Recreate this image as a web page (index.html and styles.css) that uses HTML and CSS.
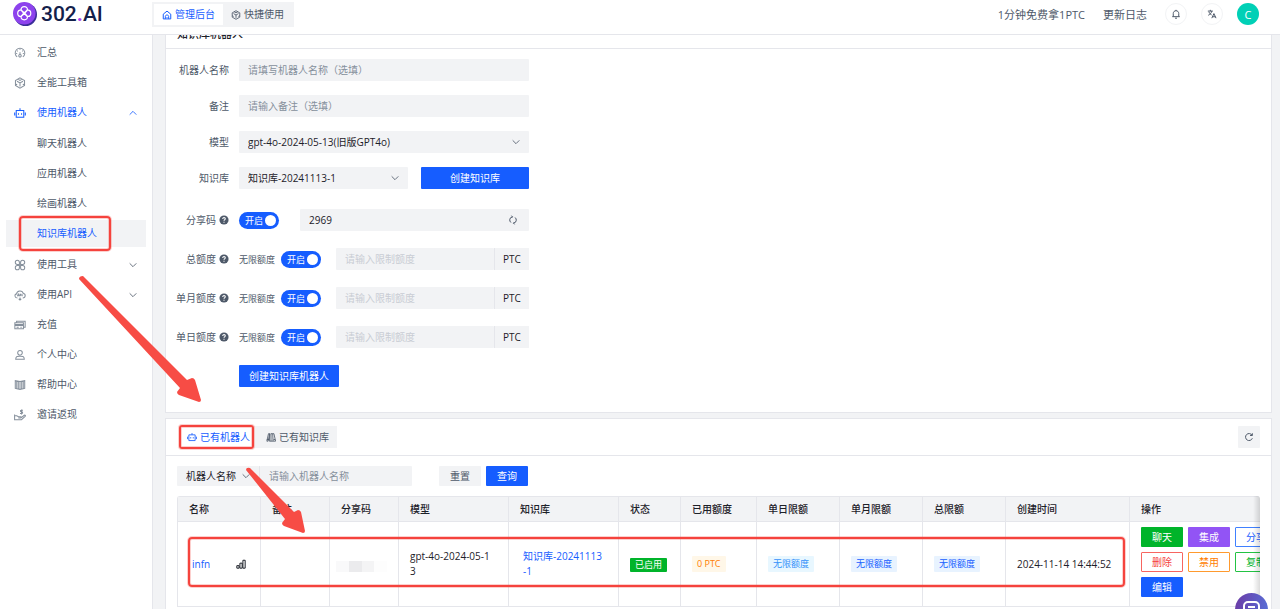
FILE: index.html
```html
<!DOCTYPE html>
<html lang="zh-CN">
<head>
<meta charset="utf-8">
<title>302.AI</title>
<link rel="stylesheet" href="styles.css">
</head>
<body>
<svg class="defs" aria-hidden="true">
  <symbol id="down" viewBox="0 0 12 12"><path d="M2 4l4 4 4-4" stroke-width="1"/></symbol>
  <symbol id="robot" viewBox="0 0 14 14"><path d="M2.600 4h8.800v8H2.600zM7 4V1.500M.8 6.500v3.500M13.200 6.500v3.500M5.200 7.200v1.800M8.800 7.200v1.800"/></symbol>
  <symbol id="cube" viewBox="0 0 14 14"><path d="M7 1l5.300 3v6L7 13l-5.300-3V4zM3.500 5L7 7l3.500-2M7 7v4M4.500 2.500L7 4l2.500-1.500M1.700 8l2 1M12.300 8l-2 1"/></symbol>
  <symbol id="help" viewBox="0 0 12 12"><circle cx="6" cy="6" r="5.500" fill="#4e5969" stroke="none"/><path d="M4.500 4.800C4.500 2.500 7.700 2.700 7.500 4.800 7.400 5.700 6 5.700 6 7M6 8.200v1.200" stroke="#fff" stroke-width="1.300"/></symbol>
</svg>

<header class="topbar">
  <a class="brand" href="#">
    <svg class="brand-mark" viewBox="0 0 24 24" aria-hidden="true"><circle cx="12.500" cy="12.500" r="11.500" fill="#3b2d99"/><circle cx="11.300" cy="11.300" r="11.300" fill="#8d42ed"/><g fill="none" stroke="#fff" stroke-width="1.200"><path d="M8.300 8.300C6.500 3.500 16 3.500 14.200 8.300 19 6.500 19 16 14.200 14.200 16 19 6.500 19 8.300 14.200 3.500 16 3.500 6.500 8.300 8.300z"/><path d="M8.300 8.300l2.400 2.900-2.400 3M14.200 8.300l-2.400 2.900 2.400 3M8.300 8.300l2.900 2.400 3-2.400M8.300 14.200l2.900-2.400 3 2.400"/></g></svg>
    <span class="brand-name">302<b>.</b>AI</span>
  </a>
  <nav class="modes">
    <a class="mode active" href="#"><svg class="ico" viewBox="0 0 12 12"><path d="M1.500 5L6 1.300 10.500 5v5.700h-9zM4 10.500V7.800c0-2.400 4-2.400 4 0v2.700M6 8.500v1"/></svg>管理后台</a>
    <a class="mode" href="#"><svg class="ico"><use href="#cube"/></svg>快捷使用</a>
  </nav>
  <div class="top-actions">
    <a class="top-link" href="#">1分钟免费拿1PTC</a>
    <a class="top-link" href="#">更新日志</a>
    <button class="round" aria-label="通知"><svg class="ico" viewBox="0 0 12 12"><path d="M1.500 9.200h9M2.700 9V5.500c0-4.600 6.600-4.600 6.600 0V9M6 1v1M4.800 11h2.400"/></svg></button>
    <button class="round" aria-label="语言"><svg class="ico" viewBox="0 0 12 12"><path d="M1 2.500h6M4 1v1.500M1.500 7.500C4 6.500 5.500 4.500 5.700 2.500M2.300 3.500C3 5.500 4 6.300 5.500 7M5.800 11l2.500-5.500L10.800 11M6.700 9.300H10"/></svg></button>
    <button class="avatar">C</button>
  </div>
</header>

<div class="shell">
  <aside class="sidebar">
    <nav class="menu">
      <a class="item" href="#"><svg class="ico" viewBox="0 0 14 14"><path d="M3.700 11.500a5.600 5.600 0 1 1 6.600 0M7 6v3M7 2.500v1M3.600 4.300l.7.700M10.400 4.300l-.7.700M2.500 7.500h1.200M10.300 7.500h1.200"/><circle cx="7" cy="10.300" r="1.500"/></svg><span>汇总</span></a>
      <a class="item" href="#"><svg class="ico"><use href="#cube"/></svg><span>全能工具箱</span></a>
      <a class="item blue" href="#"><svg class="ico"><use href="#robot"/></svg><span>使用机器人</span><svg class="arrow up"><use href="#down"/></svg></a>
      <div class="submenu">
        <a class="item" href="#">聊天机器人</a>
        <a class="item" href="#">应用机器人</a>
        <a class="item" href="#">绘画机器人</a>
        <a class="item blue selected" href="#">知识库机器人<i class="mark"></i></a>
      </div>
      <a class="item" href="#"><svg class="ico" viewBox="0 0 14 14"><path d="M6.300 6.300H3.900a2.400 2.400 0 1 1 2.400-2.400zM7.700 6.300V3.900a2.400 2.400 0 1 1 2.400 2.400zM6.300 7.700v2.400a2.400 2.400 0 1 1-2.400-2.400zM7.700 7.700h2.400a2.400 2.400 0 1 1-2.400 2.400z"/></svg><span>使用工具</span><svg class="arrow"><use href="#down"/></svg></a>
      <a class="item" href="#"><svg class="ico" viewBox="0 0 14 14"><path d="M4 10.500C.3 10.500.3 6 3 5.700 3.500 1.200 10 1.200 10.800 5.200c3.200.3 3 5.300-.6 5.300M7 12.500V10M5.500 11.500L7 13l1.500-1.500M4 8.500l1-2.500 1 2.500M7 8.500V6h1v1.300H7M9.500 6v2.500"/></svg><span>使用API</span><svg class="arrow"><use href="#down"/></svg></a>
      <a class="item" href="#"><svg class="ico" viewBox="0 0 14 14"><path d="M1 4.500h10v7H1zM3 4.500v-2h10v7h-2M1 6.500h10M1 7.500h10M3 9.500h2.500M7.500 9.500H9"/></svg><span>充值</span></a>
      <a class="item" href="#"><svg class="ico" viewBox="0 0 14 14"><circle cx="7" cy="4.500" r="2.700"/><path d="M2 12c0-4 3-3.600 5-3.600s5-.4 5 3.600z"/></svg><span>个人中心</span></a>
      <a class="item" href="#"><svg class="ico" viewBox="0 0 14 14"><path d="M7 3L1.500 2v9L7 12.200 12.500 11V2zM7 3v9M3.200 2.500v8.700M5 2.800v8.700M10.800 2.500v8.700M9 2.800v8.700"/></svg><span>帮助中心</span></a>
      <a class="item" href="#"><svg class="ico" viewBox="0 0 14 14"><path d="M.7 6.500v6.500M.7 8h2.500l2 1h2.500c1 0 1 1.500 0 1.500H5M8.500 10l3.500-2.700c1-.5 1.700.5 1 1.200L8.700 12.500H.8M10.500 1.500H8.300c-1 0-1 1.800 0 1.800h1c1 0 1 1.900 0 1.900H7M8.800.5v6"/></svg><span>邀请返现</span></a>
    </nav>
  </aside>

  <main class="main">
    <section class="card first">
      <h2 class="card-title">知识库机器人</h2>
      <form class="form">
        <div class="group">
          <div class="row"><label class="label" for="name">机器人名称</label><input class="field" id="name" placeholder="请填写机器人名称（选填）"></div>
          <div class="row"><label class="label" for="note">备注</label><input class="field" id="note" placeholder="请输入备注（选填）"></div>
          <div class="row"><label class="label" for="model">模型</label><div class="pick"><select class="field" id="model"><option>gpt-4o-2024-05-13(旧版GPT4o)</option></select><svg class="arrow"><use href="#down"/></svg></div></div>
          <div class="row"><label class="label" for="kb">知识库</label><div class="pick"><select class="field" id="kb"><option>知识库-20241113-1</option></select><svg class="arrow"><use href="#down"/></svg></div><button class="btn primary wide" type="button">创建知识库</button></div>
        </div>
        <div class="group loose">
          <div class="row"><label class="label" for="code">分享码<svg class="help"><use href="#help"/></svg></label><label class="switch"><input type="checkbox" checked>开启</label><div class="pick code"><input class="field" id="code" value="2969"><svg class="arrow" viewBox="0 0 12 12"><path d="M3.500 9A3.900 3.900 0 0 1 5 2.200M8.500 3A3.900 3.900 0 0 1 7 9.800M4.200.8L5.500 2.200 4.200 3.600M7.800 8.400L6.500 9.800l1.300 1.400"/></svg></div></div>
          <div class="row"><label class="label" for="q1">总额度<svg class="help"><use href="#help"/></svg></label><span class="small">无限额度</span><label class="switch"><input type="checkbox" checked>开启</label><div class="quota"><input class="field" id="q1" placeholder="请输入限制额度" disabled><span class="unit">PTC</span></div></div>
          <div class="row"><label class="label" for="q2">单月额度<svg class="help"><use href="#help"/></svg></label><span class="small">无限额度</span><label class="switch"><input type="checkbox" checked>开启</label><div class="quota"><input class="field" id="q2" placeholder="请输入限制额度" disabled><span class="unit">PTC</span></div></div>
          <div class="row"><label class="label" for="q3">单日额度<svg class="help"><use href="#help"/></svg></label><span class="small">无限额度</span><label class="switch"><input type="checkbox" checked>开启</label><div class="quota"><input class="field" id="q3" placeholder="请输入限制额度" disabled><span class="unit">PTC</span></div></div>
          <div class="row submit"><button class="btn primary" type="button">创建知识库机器人</button></div>
        </div>
      </form>
    </section>

    <section class="card second">
      <div class="card-head">
        <div class="tabs">
          <button class="tab active"><svg class="ico"><use href="#robot"/></svg>已有机器人<i class="mark"></i></button>
          <button class="tab"><svg class="ico" viewBox="0 0 12 12"><path stroke-width="1" d="M3 2L1 11h1.500l2-9zM6 2v9M4.500 2l-.5 9h2M6 2h2l.5 9H6M8 2h1.500l2 9H8.500M1 9h3M9 9h2"/></svg>已有知识库</button>
        </div>
        <button class="refresh" aria-label="刷新"><svg class="ico" viewBox="0 0 12 12"><path d="M10 7.500A4.200 4.200 0 1 1 9.600 3.800M10 1.500v2.700H7.300"/></svg></button>
      </div>
      <div class="content">
        <div class="filter">
          <div class="pick by"><select class="field" aria-label="筛选字段"><option>机器人名称</option></select><svg class="arrow"><use href="#down"/></svg></div>
          <input class="field term" aria-label="机器人名称" placeholder="请输入机器人名称">
          <button class="btn grey">重置</button>
          <button class="btn primary">查询</button>
        </div>
        <div class="table-wrap">
          <table>
            <colgroup><col class="c-name"><col class="c-short"><col class="c-short"><col class="c-model"><col class="c-model"><col class="c-state"><col class="c-used"><col class="c-limit"><col class="c-limit"><col class="c-limit"><col class="c-time"><col></colgroup>
            <thead><tr><th>名称</th><th>备注</th><th>分享码</th><th>模型</th><th>知识库</th><th>状态</th><th>已用额度</th><th>单日限额</th><th>单月限额</th><th>总限额</th><th>创建时间</th><th>操作</th></tr></thead>
            <tbody><tr>
              <td><div class="bot"><a href="#">infn</a><svg class="ico" viewBox="0 0 12 12"><path d="M1 8h2.700v3H1zM4.700 5h2.700v6H4.700zM8.300 1.500H11V11H8.300z"/></svg></div></td>
              <td></td>
              <td><div class="masked"><i></i><i></i><i></i><i></i></div></td>
              <td>gpt-4o-2024-05-1<br>3</td>
              <td><a class="kb" href="#">知识库-20241113<br>-1</a></td>
              <td><span class="tag on">已启用</span></td>
              <td><span class="tag orange">0 PTC</span></td>
              <td><span class="tag sky">无限额度</span></td>
              <td><span class="tag blue-tag">无限额度</span></td>
              <td><span class="tag blue-tag">无限额度</span></td>
              <td>2024-11-14 14:44:52</td>
              <td class="ops-cell"><div class="ops"><button class="btn green">聊天</button><button class="btn purple">集成</button><button class="btn line-blue">分享</button><button class="btn line-red">删除</button><button class="btn line-orange">禁用</button><button class="btn line-green">复制</button><button class="btn primary">编辑</button></div></td>
            </tr></tbody>
          </table>
          <i class="mark row-mark"></i>
        </div>
      </div>
    </section>
  </main>
</div>

<svg class="arrows" aria-hidden="true"><path d="M83 276l104 104 5-2q2 0 3 2l6 20q0 2-2 2l-20-7q-2-1-2-3l3-4L79 279q0-3 4-3zM250 468l44 44 4-2q2 0 3 2l4 19q0 2-2 2l-19-7q-2-1-2-3l3-4-39-49q0-3 4-2z"/></svg>
<button class="chat" aria-label="客服"><svg viewBox="0 0 20 20"><rect x="2" y="2" width="15" height="13" rx="4"/><path d="M6 7h7"/></svg></button>
</body>
</html>
```
FILE: styles.css
```css
* { box-sizing: border-box; }
body, button, input, select {
  font-family: "Open Sans", "Noto Sans CJK SC", sans-serif;
  font-size: 10px;
  line-height: 15px;
}
body {
  margin: 0;
  height: 100vh;
  overflow: hidden;
  display: flex;
  flex-direction: column;
  background: #f2f3f5;
  color: #1d2129;
}
a { color: #165dff; text-decoration: none; }
button, input, select { border: 0; border-radius: 1px; padding: 0; margin: 0; color: inherit; }
svg { fill: none; stroke: currentColor; stroke-width: 1.2; flex: none; }
.defs { position: absolute; width: 0; height: 0; }
.ico { width: 10px; height: 10px; }
.arrow { width: 10px; height: 10px; color: #4e5969; }

.topbar {
  flex: none;
  display: flex;
  align-items: flex-start;
  height: 35px;
  background: #fff;
  border-bottom: 1px solid #e5e6eb;
}
.brand { display: flex; align-items: center; gap: 4px; width: 152px; padding: 2px 0 0 13px; }
.brand-mark { width: 24px; height: 24px; stroke: none; }
.brand-name { font: 500 21px/24px Roboto, sans-serif; color: #13204a; }
.brand-name b { color: #a93df0; }
.modes { display: flex; margin-top: 2px; padding: 2px; background: #f2f3f5; }
.mode { display: flex; align-items: center; gap: 3px; height: 21px; padding: 0 8px; color: #4e5969; }
.mode.active { background: #fff; color: #165dff; }
.top-actions { display: flex; align-items: center; margin: 3px 21px 0 auto; }
.top-link { font-size: 11px; color: #4e5969; margin-right: 18px; }
.round, .avatar { width: 22px; height: 22px; border-radius: 50%; }
.round { display: grid; place-items: center; margin-right: 14px; background: #fff; border: 1px solid #f2f3f5; color: #4e5969; }
.avatar { background: #00d0b6; color: #fff; font-size: 11px; }

.shell { flex: 1; min-height: 0; display: flex; }
.sidebar { flex: none; width: 153px; background: #fff; border-right: 1px solid #e5e6eb; }
.menu { display: flex; flex-direction: column; gap: 3px; padding: 4px 6px; }
.item { display: flex; align-items: center; position: relative; height: 27px; padding: 0 8px; color: #4e5969; }
.item .ico { width: 12px; height: 12px; margin-right: 11px; color: #86909c; }
.item .arrow { margin-left: auto; }
.item.blue, .item.blue svg { color: #165dff; }
.arrow.up { transform: rotate(180deg); }
.submenu { display: flex; flex-direction: column; gap: 3px; padding: 1px 0; }
.submenu .item { padding-left: 31px; }
.selected { background: #f2f3f5; }
.mark { position: absolute; border: 2px solid #f5433d; border-radius: 4px; box-shadow: 0 0 0 1px #f5433d40, inset 0 0 0 1px #f5433d40; z-index: 2; }
.selected .mark { inset: -4px 35px -4px 13px; }

.main { flex: 1; min-width: 0; overflow: hidden; display: flex; flex-direction: column; gap: 5px; padding: 0 8px 0 12px; }
.card { background: #fff; border: 1px solid #e5e6eb; }
.first { margin-top: -16px; }
.second { flex: 1; }
.card-title { margin: 0; padding: 6px 11px; border-bottom: 1px solid #e5e6eb; font-size: 11px; line-height: 16px; font-weight: 500; }
.form { padding: 10px 0 25px; max-width: 363px; }
.group { display: flex; flex-direction: column; gap: 14px; }
.loose { gap: 17px; margin-top: 20px; }
.row { display: flex; align-items: center; height: 22px; }
.label { flex: none; display: flex; align-items: center; justify-content: flex-end; gap: 3px; width: 63px; margin-right: 10px; color: #4e5969; white-space: nowrap; }
.help { width: 10px; height: 10px; }
.field { flex: 1; min-width: 0; width: 100%; height: 22px; padding: 0 9px; background: #f2f3f5; appearance: none; outline: 0; }
.field::placeholder { color: #86909c; }
.field:disabled::placeholder { color: #c9cdd4; }
.pick { flex: 1; min-width: 0; display: flex; position: relative; }
.pick .arrow { position: absolute; right: 8px; top: 6px; }
.btn { height: 20px; padding: 0 9px; border: 1px solid transparent; white-space: nowrap; }
.row .btn { height: 22px; }
.wide { width: 108px; margin-left: 13px; }
.primary { background: #165dff; color: #fff; }
.submit { padding-left: 73px; }
.switch { flex: none; display: flex; align-items: center; position: relative; width: 40px; height: 17px; padding-left: 6px; border-radius: 9px; background: #165dff; color: #fff; font-size: 9px; }
.switch input { position: absolute; right: 3px; top: 3px; width: 11px; height: 11px; border-radius: 50%; background: #fff; appearance: none; }
.code { margin-left: 21px; }
.code .arrow { right: 11px; }
.small { width: 42px; font-size: 9px; color: #4e5969; }
.quota { flex: 1; min-width: 0; display: flex; margin-left: 15px; }
.unit { width: 35px; line-height: 22px; text-align: center; background: #f2f3f5; border-left: 1px solid #e5e6eb; }

.card-head { display: flex; align-items: center; justify-content: space-between; height: 37px; padding: 0 11px; border-bottom: 1px solid #e5e6eb; }
.tabs { display: flex; background: #f2f3f5; }
.tab { display: flex; align-items: center; gap: 3px; position: relative; height: 22px; padding: 0 8px 0 12px; background: none; color: #4e5969; }
.tab.active { padding: 0 4px 0 10px; background: #fff; color: #165dff; }
.tab .mark { inset: -1px 0 -1px 2px; border-radius: 3px; }
.refresh { display: grid; place-items: center; width: 22px; height: 22px; background: #f2f3f5; color: #4e5969; }
.content { padding: 10px 11px; }
.filter { display: flex; }
.filter .field { height: 20px; }
.filter .by { flex: none; width: 83px; border-right: 1px solid #e5e6eb; }
.by .arrow { top: 5px; }
.filter .term { flex: none; width: 152px; margin-right: 27px; }
.grey { background: #f2f3f5; color: #4e5969; margin-right: 5px; }
.filter .btn { width: 42px; }

.table-wrap { position: relative; overflow: hidden; margin-top: 10px; border-radius: 3px 3px 0 0; }
.table-wrap::after { content: ""; position: absolute; top: 0; right: 0; bottom: 0; width: 7px; background: linear-gradient(to right, transparent, #00000024); }
table { width: 100%; min-width: 1124px; table-layout: fixed; border-spacing: 0; border: solid #e5e6eb; border-width: 1px 0 0 1px; }
th, td { padding: 0 11px; text-align: left; border: solid #e5e6eb; border-width: 0 1px 1px 0; white-space: nowrap; }
th { height: 25px; background: #f2f3f5; font-weight: 500; }
td { height: 85px; }
.c-name { width: 83px; }
.c-short { width: 69px; }
.c-model { width: 110px; }
.c-state { width: 62px; }
.c-used { width: 76px; }
.c-limit { width: 83px; }
.c-time { width: 124px; }
.kb { display: block; padding-left: 3px; }
.bot { display: flex; justify-content: space-between; align-items: center; padding: 0 3px; }
.masked { display: flex; margin: 4px 0 0 -5px; }
.masked i { width: 14px; height: 11px; background: #f9f9fa; }
.masked i:nth-child(2) { background: #ebebed; }
.masked i:nth-child(3) { background: #f4f4f5; }
.masked i:nth-child(4) { background: #fdfdfd; }
.tag { display: inline-block; padding: 0 5px; font-size: 9px; line-height: 16px; border-radius: 1px; }
.on { line-height: 14px; background: #00b42a; color: #fff; }
.orange { background: #fff7e8; color: #ff7d00; }
.sky { background: #e8f7ff; color: #3491fa; }
.blue-tag { background: #e8f3ff; color: #165dff; }
.ops-cell { padding: 5px 11px 0; vertical-align: top; }
.ops { display: grid; grid-template-columns: repeat(3, 42px); gap: 5px; }
.ops .btn { padding: 0; }
.green { background: #00b42a; color: #fff; }
.purple { background: #9254f5; color: #fff; }
.line-blue { background: #fff; border-color: #4080ff; color: #165dff; }
.line-red { background: #fff; border-color: #f76560; color: #f53f3f; }
.line-orange { background: #fff; border-color: #ff9a2e; color: #ff7d00; }
.line-green { background: #fff; border-color: #23c343; color: #00b42a; }
.row-mark { left: 11px; top: 41px; width: 937px; height: 50px; }
.arrows { position: absolute; left: 0; top: 0; width: 310px; height: 540px; fill: #f74c45; stroke: none; pointer-events: none; z-index: 3; }
.chat { position: fixed; right: 12px; bottom: -17px; width: 33px; height: 33px; border-radius: 50%; background: linear-gradient(100deg, #6c3aa5, #5672da); color: #fff; z-index: 3; }
.chat svg { width: 20px; height: 20px; stroke-width: 2; display: block; margin: 1px auto 0; }
```
